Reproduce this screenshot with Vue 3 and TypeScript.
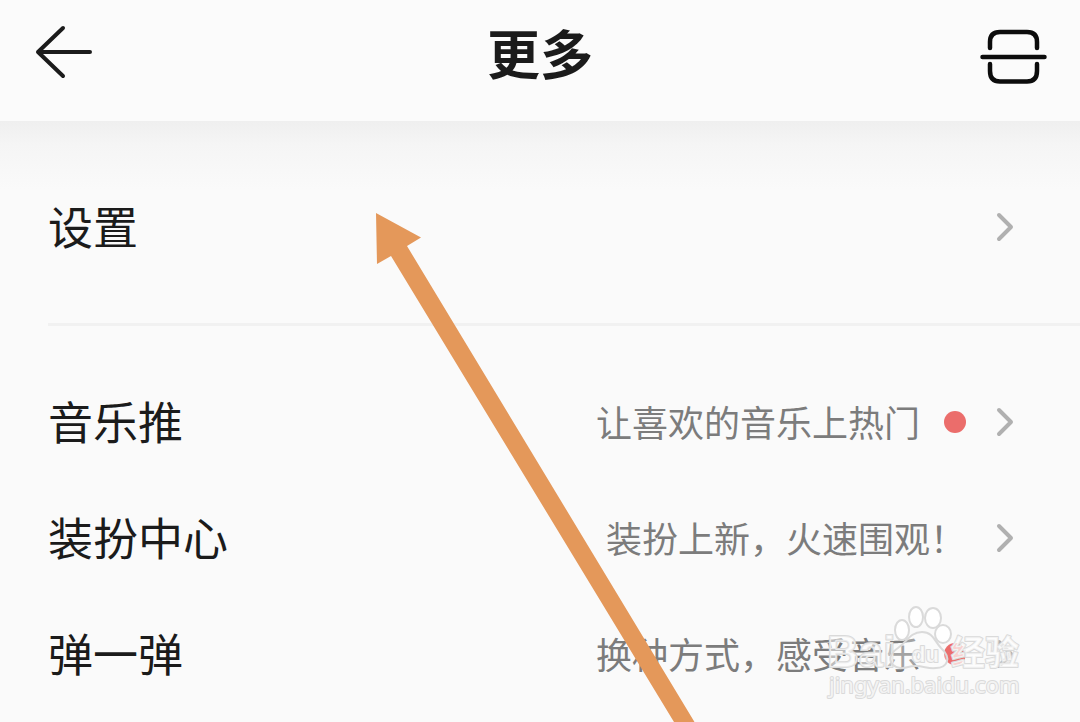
<script setup lang="ts">
interface MenuRow {
  label: string
  hint?: string
  dot?: boolean
}

const groups: MenuRow[][] = [
  [{ label: '设置' }],
  [
    { label: '音乐推', hint: '让喜欢的音乐上热门', dot: true },
    { label: '装扮中心', hint: '装扮上新，火速围观！' },
    { label: '弹一弹', hint: '换种方式，感受音乐', dot: true },
  ],
]
</script>

<template>
  <div class="page" lang="zh-CN">
    <header class="bar">
      <button class="icon-button" type="button" aria-label="返回">
        <svg width="60" height="60" viewBox="0 0 60 60" fill="none" stroke="#1b1b1b" stroke-width="4" stroke-linecap="round" stroke-linejoin="round">
          <path d="M32 5 7 29 32 53M7 29H59" transform="translate(-1 -1)" />
        </svg>
      </button>
      <h1 class="title">更多</h1>
      <button class="icon-button" type="button" aria-label="扫一扫">
        <svg width="70" height="60" viewBox="0 0 70 60" fill="none" stroke="#0c0c0c" stroke-width="4.500" stroke-linecap="round">
          <path d="M12 24V18Q12 8 22 8H49Q59 8 59 18V24M12 40V47Q12 57.500 22 57.500H49Q59 57.500 59 47V40M4.500 33H66.500" />
        </svg>
      </button>
    </header>

    <main class="content">
      <ul v-for="(rows, g) in groups" :key="g" class="group">
        <li v-for="row in rows" :key="row.label">
          <button class="row" type="button">
            <span class="label">{{ row.label }}</span>
            <span v-if="row.hint" class="hint">{{ row.hint }}</span>
            <span v-if="row.dot" class="dot"></span>
            <svg class="chevron" width="18" height="30" viewBox="0 0 18 30" fill="none" stroke="#b0b0b0" stroke-width="4" stroke-linecap="round" stroke-linejoin="round">
              <path d="M3 3 15 15 3 27" />
            </svg>
          </button>
        </li>
      </ul>
    </main>

    <svg class="arrow" width="319" height="509" viewBox="0 0 319 509" fill="#e4985a" aria-hidden="true">
      <path d="M0 0 45 24.5 31 33 318.500 509H298L15 43 1 51Z" />
    </svg>

    <svg class="watermark" width="200" height="100" viewBox="0 0 200 100" aria-hidden="true">
      <text class="mark brand" x="1" y="67">Bai</text>
      <g class="paw">
        <ellipse cx="76" cy="30" rx="7" ry="10" />
        <ellipse cx="90" cy="17" rx="7" ry="10" />
        <ellipse cx="107" cy="18" rx="8" ry="10" />
        <ellipse cx="117" cy="34" rx="8" ry="9" />
        <path class="pad" d="M96 32C107 32 109 42 115 48C127 59 120 68 110 68C102 69 98 66 90 66C82 66 79 69 74 68C62 66 61 55 72 48C81 42 84 32 96 32Z" />
      </g>
      <text class="mark brand-small" x="86" y="62">du</text>
      <text class="mark brand-cn" x="125" y="65">经验</text>
      <text class="mark site" x="3" y="93">jingyan.baidu.com</text>
    </svg>
  </div>
</template>

<style>
body {
  margin: 0;
  background: #fafafa;
}
</style>

<style scoped>
.page {
  position: relative;
  overflow: hidden;
  min-height: 100vh;
  background: #fafafa;
  color: #1b1b1b;
  font-family: "Noto Sans CJK SC", sans-serif;
}

button {
  border: 0;
  margin: 0;
  padding: 0;
  background: none;
  color: inherit;
  font: inherit;
  cursor: pointer;
}

.bar {
  display: grid;
  grid-template-columns: 1fr auto 1fr;
  align-items: center;
  box-sizing: border-box;
  height: 121px;
  padding: 0 32px 14px;
  background: #fbfbfb;
}

.icon-button {
  display: flex;
  justify-self: start;
}

.icon-button:last-child {
  justify-self: end;
}

.title {
  margin: 0;
  padding-bottom: 4px;
  font-size: 53px;
  line-height: 80px;
  font-weight: 700;
}

.content {
  background: linear-gradient(#efefef, #f5f5f5 24px, #fafafa 68px);
}

.group {
  margin: 0;
  padding: 48px 0 38px 48px;
  list-style: none;
}

.group + .group {
  position: relative;
  padding: 41px 0 8px 48px;
}

.group + .group::before {
  content: "";
  position: absolute;
  top: 0;
  left: 48px;
  right: 0;
  height: 3px;
  background: #f1f1f1;
}

.row {
  display: flex;
  align-items: center;
  width: 100%;
  height: 116px;
  padding-right: 66px;
  text-align: left;
}

.label {
  flex: 1;
  padding-bottom: 2px;
  font-size: 45px;
  line-height: 64px;
}

.hint {
  padding-bottom: 2px;
  color: #7c7c7c;
  font-size: 36px;
  line-height: 52px;
}

.dot {
  width: 22px;
  height: 22px;
  margin-left: 24px;
  border-radius: 50%;
  background: #eb6d6b;
}

.chevron {
  margin-left: 30px;
}

.arrow {
  position: absolute;
  left: 376px;
  top: 213px;
  pointer-events: none;
}

.watermark {
  position: absolute;
  right: 54px;
  top: 600px;
  pointer-events: none;
}

.mark {
  fill: #ffffff;
  fill-opacity: 0.7;
  stroke: #dadada;
  stroke-width: 2;
  stroke-linejoin: round;
  paint-order: stroke;
}

.paw {
  fill: #ffffff;
  stroke: #dadada;
  stroke-width: 2;
}

.pad {
  fill-opacity: 0.3;
}

.brand,
.brand-small {
  font-family: "Liberation Sans", sans-serif;
  font-weight: 700;
  font-size: 44px;
}

.brand {
  fill-opacity: 0.5;
}

.brand-small {
  font-size: 22px;
}

.brand-cn {
  font-size: 34px;
  font-weight: 700;
}

.site {
  font-family: "Noto Sans", sans-serif;
  font-size: 22px;
}
</style>
